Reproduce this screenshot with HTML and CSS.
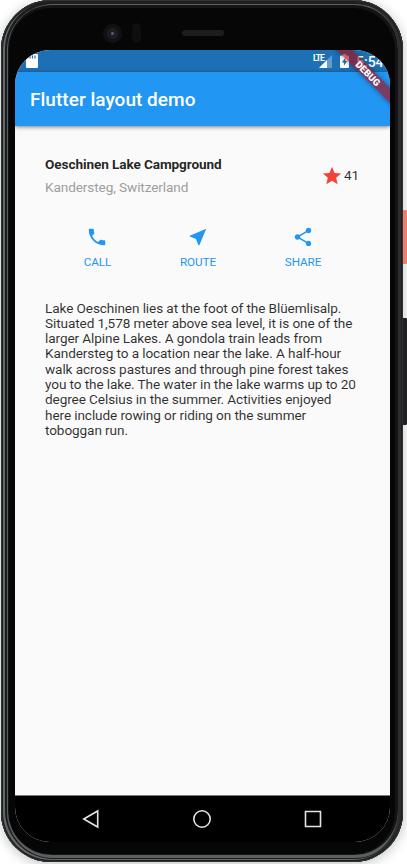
FILE: index.html
```html
<!DOCTYPE html>
<html lang="en">
<head>
<meta charset="utf-8">
<title>Flutter layout demo</title>
<link rel="stylesheet" href="styles.css">
</head>
<body>
<div class="phone">
  <span class="camera"></span>
  <span class="sensor"></span>
  <span class="speaker"></span>
  <span class="power"></span>
  <span class="volume"></span>
  <div class="screen">
    <div class="status">
      <svg class="sd" viewBox="0 0 12 14"><path d="M3 0h8q1 0 1 1v12q0 1-1 1H1q-1 0-1-1V3z" fill="#fff"/><path d="M4 1.5v3M6.5 1.5v3M9 1.5v3" stroke="#1d70b5" stroke-width="1.2"/></svg>
      <span class="lte">LTE</span>
      <svg class="signal" viewBox="0 0 13 13"><path d="M0 13L13 0v13z" fill="#649ccd"/><path d="M0 13L8 5v8z" fill="#fff"/></svg>
      <svg class="battery" viewBox="0 0 9 14"><path d="M3 0h3v1.5h2q1 0 1 1V13q0 1-1 1H1q-1 0-1-1V2.5q0-1 1-1h2z" fill="#fff"/><path d="M5.3 3.7L1.8 8.4h2.1v3.4l3.4-4.7H5.3z" fill="#1d70b5"/></svg>
      <span class="clock">5:54</span>
    </div>
    <header class="appbar"><h1>Flutter layout demo</h1></header>
    <main class="content">
      <section class="heading">
        <div class="names">
          <h2>Oeschinen Lake Campground</h2>
          <p>Kandersteg, Switzerland</p>
        </div>
        <svg class="star" viewBox="0 0 24 24"><path d="M12 17.27L18.18 21l-1.64-7.03L22 9.24l-7.19-.61L12 2 9.19 8.63 2 9.24l5.46 4.73L5.82 21z"/></svg>
        <span class="count">41</span>
      </section>
      <section class="actions">
        <div class="action"><svg viewBox="0 0 24 24"><path d="M6.62 10.79c1.44 2.83 3.76 5.14 6.59 6.59l2.2-2.2c.27-.27.67-.36 1.02-.24 1.12.37 2.33.57 3.57.57.55 0 1 .45 1 1V20c0 .55-.45 1-1 1-9.39 0-17-7.61-17-17 0-.55.45-1 1-1h3.5c.55 0 1 .45 1 1 0 1.25.2 2.45.57 3.57.11.35.03.74-.25 1.02l-2.2 2.2z"/></svg><span>CALL</span></div>
        <div class="action"><svg viewBox="0 0 24 24"><path d="M21 3L3 10.53v.98l6.84 2.65L12.48 21h.98L21 3z"/></svg><span>ROUTE</span></div>
        <div class="action"><svg viewBox="0 0 24 24"><path d="M18 16.08c-.76 0-1.44.3-1.96.77L8.91 12.7c.05-.23.09-.46.09-.7s-.04-.47-.09-.7l7.05-4.11c.54.5 1.25.81 2.04.81 1.66 0 3-1.34 3-3s-1.34-3-3-3-3 1.34-3 3c0 .24.04.47.09.7L8.04 9.81C7.5 9.31 6.79 9 6 9c-1.66 0-3 1.34-3 3s1.34 3 3 3c.79 0 1.5-.31 2.04-.81l7.12 4.16c-.05.21-.08.43-.08.65 0 1.61 1.31 2.92 2.92 2.92s2.92-1.31 2.92-2.92-1.31-2.92-2.92-2.92z"/></svg><span>SHARE</span></div>
      </section>
      <p class="description">Lake Oeschinen lies at the foot of the Blüemlisalp.<br>Situated 1,578 meter above sea level, it is one of the<br>larger Alpine Lakes. A gondola train leads from<br>Kandersteg to a location near the lake. A half-hour<br>walk across pastures and through pine forest takes<br>you to the lake. The water in the lake warms up to 20<br>degree Celsius in the summer. Activities enjoyed<br>here include rowing or riding on the summer<br>toboggan run.</p>
    </main>
    <nav class="navbar">
      <svg viewBox="0 0 20 20"><path d="M2.8 10L16.7 2v16z"/></svg>
      <svg viewBox="0 0 20 20"><circle cx="10" cy="10" r="8.2"/></svg>
      <svg viewBox="0 0 20 20"><path d="M2.5 2.5h15v15h-15z"/></svg>
    </nav>
    <span class="debug">DEBUG</span>
  </div>
</div>
</body>
</html>
```
FILE: styles.css
```css
* { box-sizing: border-box; }
body {
  margin: 0;
  height: 864px;
  overflow: hidden;
  background: #fff;
  font-family: Roboto, "Liberation Sans", sans-serif;
}
h1, h2, p { margin: 0; }
.phone {
  position: relative;
  width: 402px;
  height: 862px;
  margin-left: 1px;
  padding: 50px 13px 20px 14px;
  border-radius: 50px;
  background: #060607;
  box-shadow:
    inset 0 0 0 1px #303434,
    inset 0 0 0 2px #1c1e1f,
    inset 2px -1px 0 2px #65686b,
    inset -3px 0 0 2px #2b2d2f,
    inset 2px 0 0 4px #1c1d1f,
    inset 1px -1px 0 6px #5c5e5f,
    inset 0 0 0 8px #141415,
    0 2px 12px 1px rgba(0, 0, 0, .22);
}
.camera {
  position: absolute;
  left: 102px;
  top: 24px;
  width: 19px;
  height: 19px;
  border-radius: 50%;
  background: radial-gradient(circle, #55577a 0 1px, #1c1c22 2px 5px, #111113 6px 10px);
}
.sensor {
  position: absolute;
  left: 131px;
  top: 23px;
  width: 9px;
  height: 20px;
  border-radius: 5px;
  background: #0e0e10;
}
.speaker {
  position: absolute;
  left: 181px;
  top: 30px;
  width: 42px;
  height: 6px;
  border-radius: 3px;
  background: #1d1d1e;
}
.power, .volume {
  position: absolute;
  left: 402px;
  width: 4px;
  border-radius: 0 1px 1px 0;
}
.power { top: 210px; height: 54px; background: #e9816e; }
.volume { top: 318px; height: 107px; background: #202122; }
.screen {
  position: relative;
  display: flex;
  flex-direction: column;
  height: 792px;
  overflow: hidden;
  border-radius: 35px;
  background: #fafafa;
}
.status {
  display: flex;
  flex: none;
  height: 22px;
  background: #1d70b5;
  color: #fff;
}
.sd { width: 12px; height: 14px; margin: 4px 0 0 11px; }
.lte {
  margin: 4px 0 0 auto;
  font: 700 8.5px/8px Roboto, sans-serif;
  letter-spacing: -.9px;
}
.signal { width: 13px; height: 13px; margin: 5px 0 0 -5px; }
.battery { width: 9px; height: 14px; margin: 4px 0 0 8px; }
.clock {
  width: 34px;
  margin-left: 7px;
  font: 500 14px/24px Roboto, sans-serif;
}
.appbar {
  z-index: 1;
  display: flex;
  flex: none;
  align-items: center;
  height: 54px;
  padding: 2px 15px 0;
  background: #2196f3;
  color: #fff;
  box-shadow: 0 1px 4px rgba(0, 0, 0, .5);
}
h1 { font-size: 19px; font-weight: 500; line-height: 22px; letter-spacing: .03px; }
.content { flex: 1; color: rgba(0, 0, 0, .82); font-size: 13.6px; letter-spacing: -.1px; line-height: 15.3px; }
.heading { display: flex; align-items: center; padding: 31px 31px 31px 30px; }
.names { flex: 1; }
h2 { margin-bottom: 8px; color: rgba(0, 0, 0, .87); font-size: 13.6px; font-weight: 700; line-height: 15px; }
.names p { color: #9e9e9e; line-height: 15px; }
.star { width: 22px; height: 22px; fill: #f44336; }
.count { margin-left: 1px; }
.actions { display: flex; justify-content: space-evenly; }
.action { display: flex; flex-direction: column; align-items: center; color: #2196f3; }
.action svg { width: 22px; height: 22px; fill: currentColor; }
.action span { margin-top: 7px; font-size: 11.7px; letter-spacing: -.05px; line-height: 14px; }
.description { padding: 31.5px 30px 0; white-space: nowrap; }
.navbar {
  display: flex;
  flex: none;
  align-items: center;
  justify-content: center;
  gap: 91px;
  height: 47px;
  padding-right: 1px;
  border-top: 1px solid #777;
  background: #000;
}
.navbar svg { width: 20px; height: 20px; fill: none; stroke: #e4e4e4; stroke-width: 1.6; }
.debug {
  position: absolute;
  z-index: 2;
  right: -28px;
  top: 17.5px;
  width: 100px;
  height: 11px;
  background: rgba(168, 12, 24, .65);
  color: #fff;
  font-size: 9.5px;
  font-weight: 900;
  line-height: 11px;
  text-align: center;
  transform: rotate(45deg);
  box-shadow: 0 0 5px rgba(0, 0, 0, .4);
}
```
